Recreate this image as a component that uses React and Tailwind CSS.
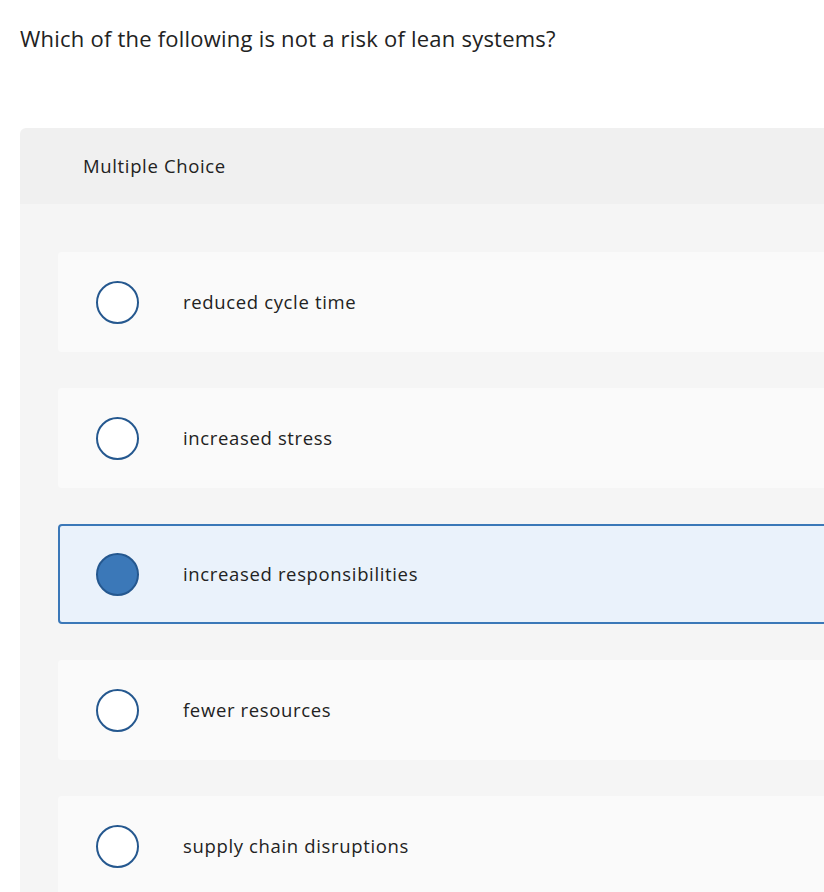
const options = [
  { label: 'reduced cycle time', selected: false },
  { label: 'increased stress', selected: false },
  { label: 'increased responsibilities', selected: true },
  { label: 'fewer resources', selected: false },
  { label: 'supply chain disruptions', selected: false },
];

export default function App() {
  return (
    <div className="w-[824px] h-[892px] overflow-hidden bg-white text-[#222]" style={{ fontFamily: '"Open Sans", sans-serif' }}>
      <div className="pl-5 pt-[24px]">
        <h1 className="text-[22px] leading-[28px] tracking-[0.01em]">Which of the following is not a risk of lean systems?</h1>
      </div>
      <div className="ml-5 mt-[76px] w-[900px] rounded-tl-md overflow-hidden">
        <div className="bg-[#f0f0f0] h-[76px] flex items-center pl-[63px] text-[18.5px] tracking-[0.035em]">Multiple Choice</div>
        <div className="bg-[#f5f5f5] pl-[38px] pt-[48px] pb-10 flex flex-col gap-[36px]">
          {options.map((o) => (
            <div
              key={o.label}
              className={
                o.selected
                  ? 'h-[100px] rounded-l-[4px] bg-[#eaf2fb] border-2 border-[#3b78b8] flex items-center pl-[36px]'
                  : 'h-[100px] rounded-l-[4px] bg-[#fafafa] border-2 border-transparent flex items-center pl-[36px]'
              }
            >
              <span
                className={
                  o.selected
                    ? 'w-[43px] h-[43px] rounded-full border-2 border-[#25588f] bg-[#3b78b8] shrink-0'
                    : 'w-[43px] h-[43px] rounded-full border-2 border-[#25588f] bg-white shrink-0'
                }
              />
              <span className="ml-[44px] text-[18.5px] tracking-[0.035em]">{o.label}</span>
            </div>
          ))}
        </div>
      </div>
    </div>
  );
}
